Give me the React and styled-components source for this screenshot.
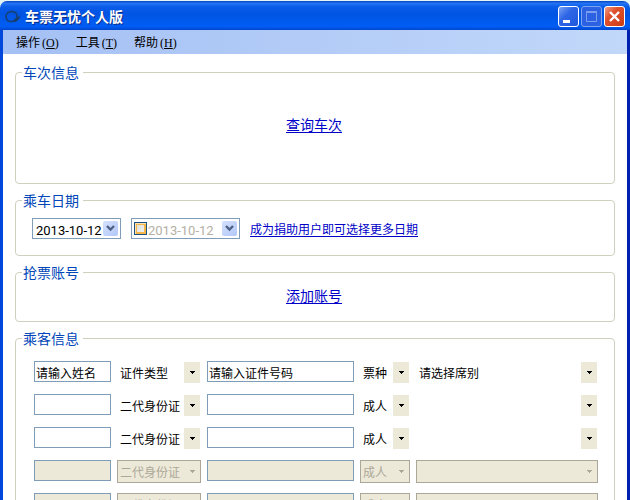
import React from "react";
import styled, { createGlobalStyle } from "styled-components";

const GlobalStyle = createGlobalStyle`
  * {
    box-sizing: border-box;
  }

  body {
    margin: 0;
    overflow: hidden;
    background: #e4f4f4;
    color: #000;
    font: 12px/16px "Noto Sans CJK SC", sans-serif;
  }

  button,
  input,
  select {
    margin: 0;
    font: inherit;
    color: inherit;
  }
`;

const Window = styled.div`
  display: flex;
  flex-direction: column;
  min-height: 100vh;
  padding-top: 1px;
`;

const TitleBar = styled.header`
  display: flex;
  align-items: center;
  height: 29px;
  padding: 2px 5px 0;
  border-radius: 7px 7px 0 0;
  background: linear-gradient(
    #0842c0 0%,
    #2474f4 8%,
    #0a5ce8 20%,
    #0054e3 45%,
    #005cf0 75%,
    #005cf4 88%,
    #0046cc 100%
  );
`;

const Title = styled.h1`
  flex: 1;
  margin: 0 0 0 4px;
  padding-bottom: 2px;
  color: #fff;
  font-size: 14px;
  font-weight: 700;
  line-height: 20px;
  text-shadow: 1px 1px 0 #0a2c88;
`;

const WindowButtons = styled.div`
  display: flex;
  gap: 2px;
`;

const WindowButton = styled.button`
  display: flex;
  width: 21px;
  height: 21px;
  padding: 0;
  border: 1px solid ${(props) => (props.disabled ? "#7fa5f0" : "#fff")};
  border-radius: 3px;
  background: ${(props) =>
    props.$close
      ? "linear-gradient(135deg, #f0a088, #e0532f 35%, #cc3c14)"
      : props.disabled
        ? "#2c62e2"
        : "linear-gradient(135deg, #7aa4f6, #2e66e6 40%, #2058dc)"};
`;

const Frame = styled.div`
  display: flex;
  flex: 1;
  flex-direction: column;
  border: solid #0048dc;
  border-width: 0 3px;
  border-right-color: #0020b0;
  background: #fff;
`;

const MenuBar = styled.nav`
  display: flex;
  gap: 17px;
  height: 24px;
  padding: 0 13px;
  background: linear-gradient(90deg, #a4c0f4, #c2d8fa);
`;

const MenuButton = styled.button`
  padding: 0;
  border: 0;
  background: none;
`;

const Mnemonic = styled.span`
  margin-left: 2px;
  font: 12px/16px "Liberation Serif", serif;
`;

const Content = styled.main`
  display: flex;
  flex-direction: column;
  gap: 8px;
  padding: 10px 12px;
`;

const Group = styled.fieldset`
  min-width: 0;
  margin: 0;
  padding: 0;
  border: 1px solid #d0d0bf;
  border-radius: 4px;
`;

const Legend = styled.legend`
  margin-left: 6px;
  padding: 0 4px 0 1px;
  color: #0046b8;
  font-size: 14px;
  line-height: 16px;
`;

const Trains = styled.div`
  padding: 36px 14px 51px 12px;
  text-align: center;
`;

const Accounts = styled.div`
  padding: 7px 14px 18px 12px;
  text-align: center;
`;

const Link = styled.a`
  display: inline-block;
  vertical-align: top;
  color: #0000c8;
  font-size: ${(props) => (props.$small ? "12px" : "14px")};
  line-height: 16px;
  text-decoration: underline;
  text-underline-offset: 2px;
`;

const DateRow = styled.div`
  display: flex;
  align-items: center;
  padding: 10px 16px 16px;
`;

const DateBox = styled.div`
  display: flex;
  align-items: center;
  width: ${(props) => (props.$wide ? "109px" : "89px")};
  height: 21px;
  margin-right: 10px;
  padding: 0 2px;
  border: 1px solid #7f9db9;
`;

const DateInput = styled.input`
  flex: 1;
  min-width: 0;
  height: 19px;
  padding: 3px 0 0 1px;
  border: 0;
  background: none;
  font: 13px/16px Roboto, sans-serif;

  &:disabled {
    color: #b4b0a4;
  }
`;

const DateCheck = styled.input`
  appearance: none;
  flex: none;
  width: 13px;
  height: 13px;
  border: 1px solid #1c5180;
  background: linear-gradient(135deg, #dcdcd8, #f4f4f0);
  box-shadow:
    inset 1px 1px 0 #fbe4b4,
    inset 0 0 0 2px #f5b848;
`;

const DropButton = styled.button`
  display: flex;
  flex: none;
  align-items: center;
  justify-content: center;
  width: 15px;
  height: 15px;
  padding: 0;
  border: 0;
  border-radius: 2px;
  background: linear-gradient(135deg, #d4e0fe, #b2c8f8);
`;

const Passengers = styled.div`
  display: flex;
  flex-direction: column;
  gap: 10px;
  padding: 15px 16px 16px 18px;
`;

const PassengerRow = styled.div`
  display: grid;
  grid-template-columns: 77px 84px 147px 50px 1fr;
  gap: 6px;
  align-items: start;
  height: 23px;
`;

const TextInput = styled.input`
  width: 100%;
  height: 21px;
  padding: 2px 1px 0;
  border: 1px solid #7f9db9;
  background: #fff;

  &:disabled {
    background: #ece9d8;
  }
`;

const SelectBox = styled.div`
  position: relative;
  height: 23px;
`;

const Select = styled.select`
  appearance: none;
  width: 100%;
  height: 23px;
  padding: 0 16px 0 2px;
  border: 1px solid transparent;
  border-radius: 0;
  background: #fff;

  &:disabled {
    border-color: #aca899;
    background: #ece9d8;
    color: #aca899;
    opacity: 1;
  }
`;

const Arrow = styled.span`
  position: absolute;
  top: 1px;
  right: 1px;
  display: flex;
  align-items: center;
  justify-content: center;
  width: 16px;
  height: 21px;
  background: #ece9d8;
  color: ${(props) => (props.$disabled ? "#aca899" : "#000")};
  pointer-events: none;
`;

const LogoIcon = () => (
  <svg width="16" height="16" viewBox="0 0 16 16" fill="none">
    <path
      d="M7 12.500C3 13 1 10.500 1 7.500C1 4.500 3.500 2.500 7 2.500C10 2.500 12 4.500 12 7C12 9.500 10 11.500 7 12.500"
      stroke="#14427c"
      strokeWidth="1.800"
    />
    <path d="M8 13.500C12 13 14.500 10.500 15.500 6L11.500 9.500Z" fill="#1c3c60" />
  </svg>
);

const MinimizeIcon = () => (
  <svg width="19" height="19">
    <rect x="4" y="13" width="7" height="3" fill="#fff" />
  </svg>
);

const MaximizeIcon = () => (
  <svg width="19" height="19" fill="none" stroke="#7c9ff0">
    <path d="M4.500 5.500H14.500V14.500H4.500ZM4 4.500H15" />
  </svg>
);

const CloseIcon = () => (
  <svg width="19" height="19">
    <path d="M5 5L14 14M14 5L5 14" stroke="#fff" strokeWidth="2.400" />
  </svg>
);

const DateField = ({ label, value, disabled, checkLabel }) => (
  <DateBox $wide={Boolean(checkLabel)}>
    {checkLabel && <DateCheck type="checkbox" aria-label={checkLabel} />}
    <DateInput aria-label={label} defaultValue={value} disabled={disabled} />
    <DropButton type="button" aria-label={`${label} 选择`}>
      <svg width="9" height="7" fill="none">
        <path d="M1 1L4.500 4.500L8 1" stroke="#4d6185" strokeWidth="2.400" />
      </svg>
    </DropButton>
  </DateBox>
);

const DropDown = ({ label, value, disabled }) => (
  <SelectBox>
    <Select aria-label={label} disabled={disabled}>
      <option>{value}</option>
    </Select>
    <Arrow $disabled={disabled}>
      <svg width="5" height="3" fill="currentColor" shapeRendering="crispEdges">
        <path d="M0 0H5V1H4V2H3V3H2V2H1V1H0Z" />
      </svg>
    </Arrow>
  </SelectBox>
);

const menus = [
  { name: "操作", hotkey: "O" },
  { name: "工具", hotkey: "T" },
  { name: "帮助", hotkey: "H" },
];

const adult = { name: "", type: "二代身份证", number: "", kind: "成人", seat: "" };

const passengers = [
  {
    id: 0,
    name: "请输入姓名",
    type: "证件类型",
    number: "请输入证件号码",
    kind: "票种",
    seat: "请选择席别",
  },
  { id: 1, ...adult },
  { id: 2, ...adult },
  { id: 3, ...adult, disabled: true },
  { id: 4, ...adult, disabled: true },
];

const App = () => (
  <>
    <GlobalStyle />
    <Window>
      <TitleBar>
        <LogoIcon />
        <Title>车票无忧个人版</Title>
        <WindowButtons>
          <WindowButton type="button" aria-label="最小化">
            <MinimizeIcon />
          </WindowButton>
          <WindowButton type="button" aria-label="最大化" disabled>
            <MaximizeIcon />
          </WindowButton>
          <WindowButton type="button" aria-label="关闭" $close>
            <CloseIcon />
          </WindowButton>
        </WindowButtons>
      </TitleBar>
      <Frame>
        <MenuBar>
          {menus.map((m) => (
            <MenuButton key={m.hotkey} type="button">
              {m.name}
              <Mnemonic>
                (<u>{m.hotkey}</u>)
              </Mnemonic>
            </MenuButton>
          ))}
        </MenuBar>
        <Content>
          <Group>
            <Legend>车次信息</Legend>
            <Trains>
              <Link href="#trains">查询车次</Link>
            </Trains>
          </Group>
          <Group>
            <Legend>乘车日期</Legend>
            <DateRow>
              <DateField label="乘车日期" value="2013-10-12" />
              <DateField
                label="备选日期"
                value="2013-10-12"
                checkLabel="启用备选日期"
                disabled
              />
              <Link href="#donate" $small>
                成为捐助用户即可选择更多日期
              </Link>
            </DateRow>
          </Group>
          <Group>
            <Legend>抢票账号</Legend>
            <Accounts>
              <Link href="#account">添加账号</Link>
            </Accounts>
          </Group>
          <Group>
            <Legend>乘客信息</Legend>
            <Passengers>
              {passengers.map((p) => (
                <PassengerRow key={p.id}>
                  <TextInput
                    aria-label="姓名"
                    defaultValue={p.name}
                    disabled={p.disabled}
                  />
                  <DropDown label="证件类型" value={p.type} disabled={p.disabled} />
                  <TextInput
                    aria-label="证件号码"
                    defaultValue={p.number}
                    disabled={p.disabled}
                  />
                  <DropDown label="票种" value={p.kind} disabled={p.disabled} />
                  <DropDown label="席别" value={p.seat} disabled={p.disabled} />
                </PassengerRow>
              ))}
            </Passengers>
          </Group>
        </Content>
      </Frame>
    </Window>
  </>
);

export default App;
